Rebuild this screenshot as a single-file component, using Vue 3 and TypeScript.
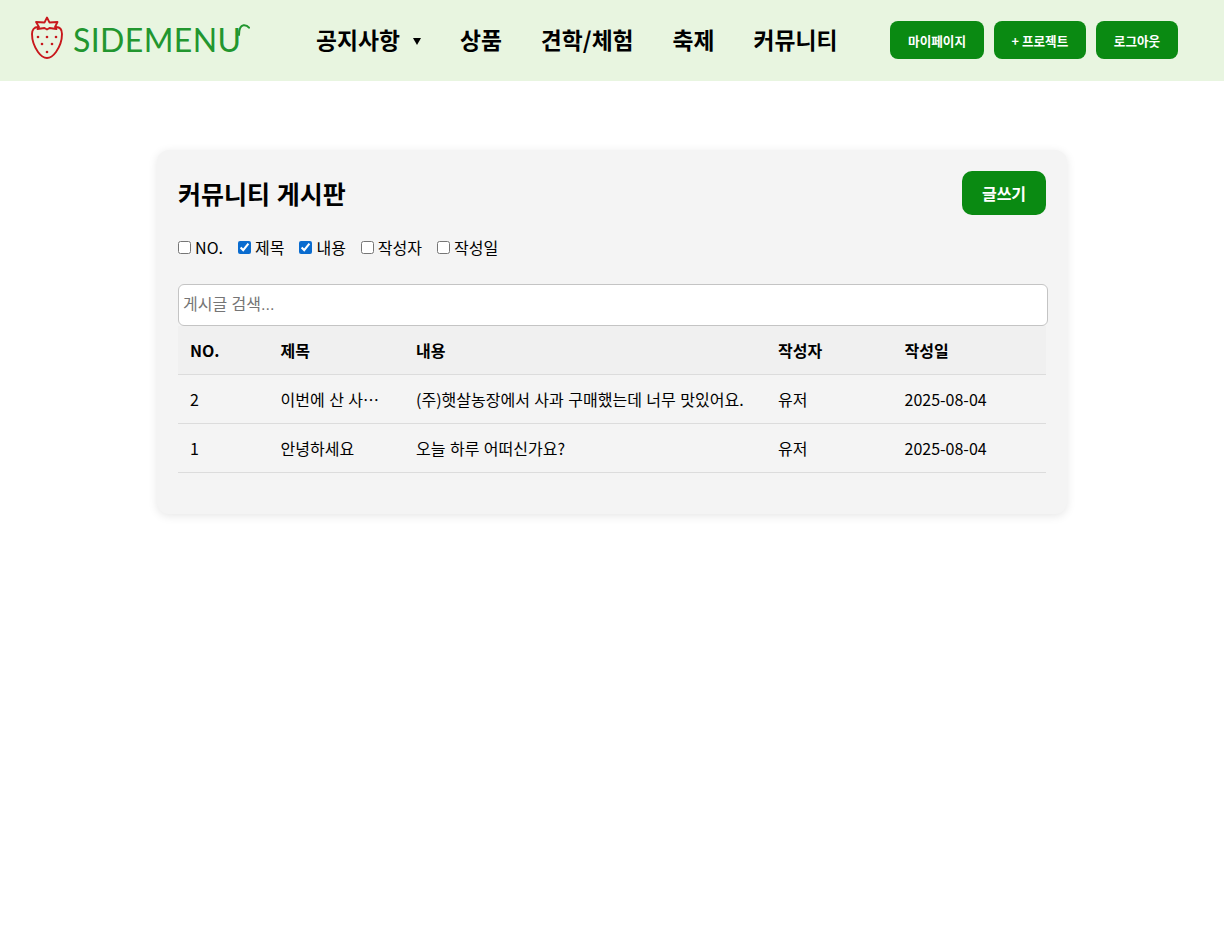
<script setup lang="ts">
interface Post { no: number; title: string; body: string; author: string; date: string }
const nav: string[] = ['상품', '견학/체험', '축제', '커뮤니티']
const actions: string[] = ['마이페이지', '+ 프로젝트', '로그아웃']
const filters = [
  { label: 'NO.', checked: false },
  { label: '제목', checked: true },
  { label: '내용', checked: true },
  { label: '작성자', checked: false },
  { label: '작성일', checked: false },
]
const posts: Post[] = [
  { no: 2, title: '이번에 산 사과 정말 맛있어요', body: '(주)햇살농장에서 사과 구매했는데 너무 맛있어요.', author: '유저', date: '2025-08-04' },
  { no: 1, title: '안녕하세요', body: '오늘 하루 어떠신가요?', author: '유저', date: '2025-08-04' },
]
</script>

<template>
  <div class="page">
    <header class="header">
      <a class="logo">
        <svg class="berry" width="34" height="44" viewBox="0 0 34 44" fill="none">
          <path d="M8 11C4 11 2 14 2 18c0 6 2.500 13 6 18 2.500 3.500 5.500 6 9 6s6.500-2.500 9-6c3.500-5 6-12 6-18 0-4-2-7-6-7" stroke="#c8181c" stroke-width="1.900" stroke-linecap="round"/>
          <path d="M17 1.500l2.500 5 8-.5-2.500 5 1.500 2-7-1-2.500 1.500-2.500-1.500-7 1 1.500-2L6 6l8.500.5z" stroke="#c8181c" stroke-width="1.800" stroke-linejoin="round"/>
          <g fill="#c8181c">
            <circle cx="8" cy="21" r="1.300"/><circle cx="17" cy="21" r="1.300"/><circle cx="26" cy="21" r="1.300"/>
            <circle cx="12" cy="28" r="1.300"/><circle cx="22" cy="28" r="1.300"/><circle cx="17" cy="36" r="1.300"/>
          </g>
        </svg>
        <span class="wordmark">SIDEMENU<svg class="tail" width="12" height="12" viewBox="0 0 12 12" fill="none"><path d="M1 11C1 5 2.500 1.500 5.500 1.200c2-.2 4 .5 5.500 2.500" stroke="#22962f" stroke-width="2" stroke-linecap="round"/></svg></span>
      </a>
      <nav class="nav">
        <a class="nav-item">공지사항<span class="caret"></span></a>
        <a v-for="item in nav" :key="item" class="nav-item">{{ item }}</a>
      </nav>
      <div class="actions">
        <button v-for="a in actions" :key="a" class="action">{{ a }}</button>
      </div>
    </header>

    <main class="main">
      <section class="card">
        <div class="card-head">
          <h2 class="title">커뮤니티 게시판</h2>
          <button class="write">글쓰기</button>
        </div>
        <div class="filters">
          <label v-for="f in filters" :key="f.label" class="filter">
            <input type="checkbox" :checked="f.checked" />{{ f.label }}
          </label>
        </div>
        <input class="search" type="text" placeholder="게시글 검색..." />
        <table class="table">
          <colgroup>
            <col class="col-no" />
            <col class="col-title" />
            <col class="col-body" />
            <col class="col-author" />
            <col />
          </colgroup>
          <thead>
            <tr>
              <th>NO.</th><th>제목</th><th>내용</th><th>작성자</th><th>작성일</th>
            </tr>
          </thead>
          <tbody>
            <tr v-for="p in posts" :key="p.no">
              <td>{{ p.no }}</td>
              <td><span class="clip">{{ p.title }}</span></td>
              <td>{{ p.body }}</td>
              <td>{{ p.author }}</td>
              <td>{{ p.date }}</td>
            </tr>
          </tbody>
        </table>
      </section>
    </main>
  </div>
</template>

<style>
body { background: #fff; }
</style>

<style scoped>
.page {
  font-family: "Noto Sans CJK KR", "Noto Sans", sans-serif;
  color: #000;
  min-height: 942px;
}
.header {
  height: 81px;
  background: #e8f5e0;
  display: flex;
  align-items: center;
  padding: 0 46px 1px 30px;
  box-sizing: border-box;
}
.logo {
  display: flex;
  align-items: center;
  gap: 9px;
  width: 286px;
  flex: none;
  margin-top: -5px;
}
.wordmark {
  position: relative;
  font-family: "Lato", sans-serif;
  font-weight: 400;
  font-size: 32px;
  letter-spacing: 0.400px;
  line-height: 44px;
  color: #22962f;
  margin-top: 5px;
}
.tail {
  position: absolute;
  right: -8px;
  top: 6px;
}
.nav {
  display: flex;
  align-items: center;
  gap: 39px;
  flex: 1;
}
.nav-item {
  font-size: 22.800px;
  font-weight: 700;
  line-height: 32px;
  display: flex;
  align-items: center;
}
.caret {
  width: 0;
  height: 0;
  border-left: 4px solid transparent;
  border-right: 4px solid transparent;
  border-top: 7px solid #000;
  margin-left: 13px;
  margin-top: 2px;
}
.actions {
  display: flex;
  gap: 10px;
}
.action {
  height: 38px;
  padding: 0 17.800px;
  border: none;
  border-radius: 8px;
  background: #0a8a12;
  color: #fff;
  font-family: inherit;
  font-size: 12.600px;
  font-weight: 700;
}
.main {
  padding-top: 69px;
  display: flex;
  justify-content: center;
}
.card {
  width: 910px;
  height: 364px;
  box-sizing: border-box;
  padding: 21px;
  background: #f4f4f4;
  border-radius: 12px;
  box-shadow: 0 2px 10px rgba(0, 0, 0, 0.1);
}
.card-head {
  display: flex;
  align-items: center;
  justify-content: space-between;
  height: 44px;
}
.title {
  margin: -1px 0 0;
  font-size: 25px;
  font-weight: 700;
  line-height: 34px;
  word-spacing: 1px;
}
.write {
  width: 84px;
  height: 44px;
  border: none;
  border-radius: 10px;
  background: #0a8a12;
  color: #fff;
  font-family: inherit;
  font-size: 16px;
  font-weight: 700;
}
.filters {
  display: flex;
  gap: 14.900px;
  margin-top: 20px;
  height: 24px;
  align-items: center;
}
.filter {
  display: flex;
  align-items: center;
  font-size: 16px;
  line-height: 24px;
}
.filter input {
  margin: 0 4.100px 0 0;
  width: 13px;
  height: 13px;
  accent-color: #0a6ccf;
}
.search {
  display: block;
  box-sizing: border-box;
  width: 870px;
  height: 42px;
  margin-top: 25px;
  padding: 0 4px;
  border: 1px solid #c4c4c4;
  border-radius: 6px;
  background: #fff;
  font-family: "Liberation Sans", "Noto Sans CJK KR", sans-serif;
  font-size: 16px;
}
.search::placeholder {
  color: #757575;
}
.table {
  width: 868px;
  border-collapse: separate;
  border-spacing: 0;
  table-layout: fixed;
  font-size: 16px;
  word-spacing: 0.900px;
}
.col-no { width: 90.500px; }
.col-title { width: 135.500px; }
.col-body { width: 362px; }
.col-author { width: 126.500px; }
.table th,
.table td {
  height: 49px;
  box-sizing: border-box;
  padding: 0 12px;
  text-align: left;
  border-bottom: 1px solid #dcdcdc;
}
.table th {
  background: #f0f0f0;
  font-weight: 700;
}
.clip {
  display: block;
  white-space: nowrap;
  overflow: hidden;
  text-overflow: ellipsis;
}
</style>
